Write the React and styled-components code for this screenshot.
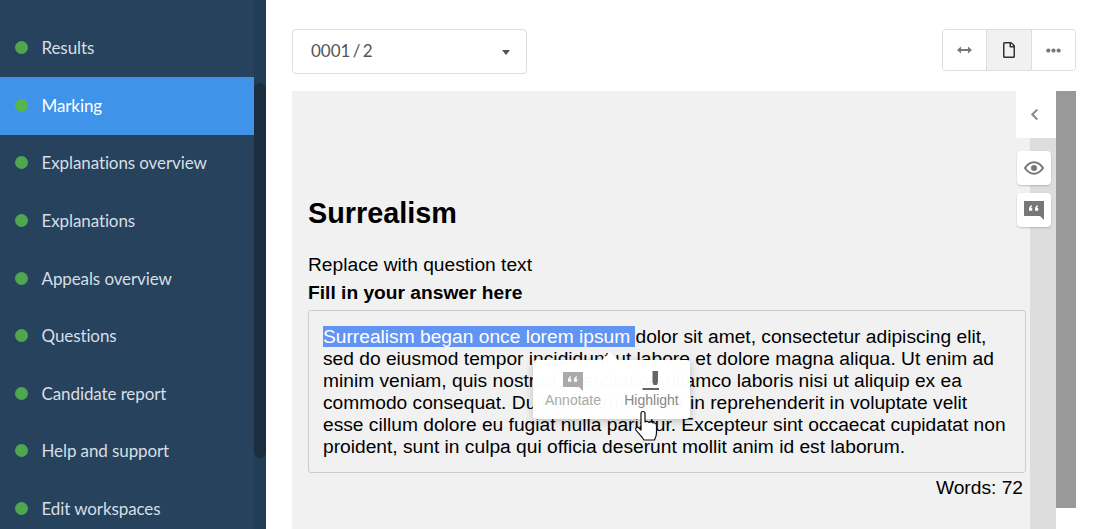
import React from "react";
import styled, { createGlobalStyle } from "styled-components";
import { FaEllipsisH, FaRegFile, FaChevronLeft } from "react-icons/fa";

const GlobalStyle = createGlobalStyle`
  html, body {
    margin: 0;
    height: 100%;
    overflow: hidden;
    background: #fff;
  }
`;

const Page = styled.div`
  display: flex;
  height: 529px;
  overflow: hidden;
`;

const Sidebar = styled.nav`
  width: 254px;
  flex: none;
  padding-top: 19px;
  background: #26425d;
  font-family: Lato, sans-serif;
  font-size: 17px;
  letter-spacing: -0.1px;
  overflow: hidden;
`;

const NavItem = styled.div`
  height: 57.6px;
  display: flex;
  align-items: center;
  gap: 13.5px;
  padding-left: 15px;
  color: ${(p) => (p.$active ? "#fff" : "#d8dee4")};
  background: ${(p) => (p.$active ? "#3f94ea" : "transparent")};
  box-shadow: ${(p) => (p.$active ? "0 1px 0 #3f94ea" : "none")};
`;

const Dot = styled.span`
  width: 13px;
  height: 13px;
  border-radius: 50%;
  background: ${(p) => (p.$active ? "#56b54c" : "#4fa651")};
`;

const ScrollTrack = styled.div`
  width: 12px;
  flex: none;
  padding-top: 83px;
  background: #233d56;
`;

const ScrollThumb = styled.div`
  height: 375px;
  border-radius: 6px;
  background: #1a2e40;
`;

const Main = styled.main`
  flex: 1;
  min-width: 0;
  padding: 29px 17px 0 26px;
`;

const TopBar = styled.div`
  display: flex;
  justify-content: space-between;
  align-items: flex-start;
  margin-bottom: 17px;
`;

const Select = styled.div`
  width: 235px;
  height: 45px;
  box-sizing: border-box;
  display: flex;
  align-items: center;
  justify-content: space-between;
  padding: 0 16px 2px 18px;
  border: 1px solid #ddd;
  border-radius: 4px;
  font-family: Lato, sans-serif;
  font-size: 17px;
  word-spacing: -2px;
  color: #555;
`;

const Caret = styled.span`
  width: 0;
  height: 0;
  margin-top: 4px;
  border-left: 4.5px solid transparent;
  border-right: 4.5px solid transparent;
  border-top: 5px solid #555;
`;

const ButtonGroup = styled.div`
  display: flex;
  height: 42px;
  box-sizing: border-box;
  border: 1px solid #ddd;
  border-radius: 4px;
  overflow: hidden;
`;

const GroupButton = styled.div`
  width: ${(p) => p.$w}px;
  display: flex;
  align-items: center;
  justify-content: center;
  color: ${(p) => (p.$active ? "#333" : "#777")};
  background: ${(p) => (p.$active ? "#f1f1f1" : "#fff")};
  border-left: ${(p) => (p.$first ? "none" : "1px solid #ddd")};
  font-size: ${(p) => p.$size}px;
`;

const Workspace = styled.div`
  display: flex;
  align-items: flex-start;
`;

const Paper = styled.section`
  position: relative;
  width: 764px;
  height: 438px;
  flex: none;
  display: flex;
  background: #f1f1f1;
  font-family: "Liberation Sans", Arial, sans-serif;
  color: #000;
`;

const Sheet = styled.div`
  flex: 1;
  min-width: 0;
  padding: 106px 4px 0 16px;
`;

const Strip = styled.div`
  width: 26px;
  flex: none;
  background: #ddd;
`;

const ScrollBlock = styled.div`
  width: 20px;
  height: 417px;
  flex: none;
  background: #999;
`;

const Title = styled.h1`
  margin: 0 0 24px;
  font-size: 28.8px;
  line-height: 33px;
  font-weight: 700;
`;

const Prompt = styled.div`
  font-size: 19.2px;
  line-height: 22px;
  margin-bottom: ${(p) => p.$mb}px;
  font-weight: ${(p) => (p.$bold ? 700 : 400)};
`;

const AnswerBox = styled.div`
  position: relative;
  height: 163px;
  box-sizing: border-box;
  padding: 15px 14px 0;
  border: 1px solid #ccc;
  border-radius: 3px;
  font-size: 19.2px;
  line-height: 22px;
`;

const Selected = styled.span`
  background: #6194f3;
  color: #fff;
`;

const WordCount = styled.div`
  margin-top: 4px;
  padding-right: 3px;
  text-align: right;
  font-size: 19.2px;
  line-height: 22px;
`;

const Popup = styled.div`
  position: absolute;
  left: 224px;
  top: 49px;
  width: 157px;
  height: 59px;
  display: flex;
  border-radius: 4px;
  background: rgba(255, 255, 255, 0.985);
  box-shadow: 0 2px 8px rgba(0, 0, 0, 0.22);

  &::before {
    content: "";
    position: absolute;
    left: 69px;
    top: -8px;
    border-left: 8px solid transparent;
    border-right: 8px solid transparent;
    border-bottom: 8px solid #fff;
  }
`;

const PopupAction = styled.div`
  flex: none;
  width: ${(p) => p.$w}px;
  display: flex;
  flex-direction: column;
  align-items: center;
  padding-top: 11px;
  font-size: 14px;
  line-height: 16px;
  color: ${(p) => p.$color};
`;

const PopupIcon = styled.svg`
  display: block;
  margin-bottom: 1px;
`;

const HandCursor = styled.svg`
  position: absolute;
  left: 325px;
  top: 99px;
`;

const SideTab = styled.div`
  position: absolute;
  left: 724px;
  top: 0;
  width: 40px;
  height: 47px;
  box-sizing: border-box;
  padding-right: 3px;
  display: flex;
  align-items: center;
  justify-content: center;
  background: #fff;
  border-radius: 0 0 0 2px;
  color: #888;
  font-size: 13px;
`;

const SideTools = styled.div`
  position: absolute;
  left: 725px;
  top: 60px;
  display: flex;
  flex-direction: column;
  gap: 8px;
`;

const ToolButton = styled.div`
  width: 34px;
  height: 34px;
  display: flex;
  align-items: center;
  justify-content: center;
  background: #fff;
  border-radius: 4px;
  box-shadow: 0 1px 2px rgba(0, 0, 0, 0.2);
`;

const QuoteBubble = ({ color }) => (
  <PopupIcon width="20" height="20" viewBox="0 0 20 20" fill={color}>
    <path
      fillRule="evenodd"
      d="M0 1h20v19l-4-4H0zM5 9.500c0-2.300.8-3.700 2.800-4.200l.3 1.100c-.9.300-1.300.8-1.300 1.300h1.400v3H5zM11 9.500c0-2.300.8-3.700 2.800-4.200l.3 1.100c-.9.300-1.300.8-1.300 1.300h1.400v3H11z"
    />
  </PopupIcon>
);

const WidthArrows = () => (
  <svg width="15" height="10" viewBox="0 0 15 10" fill="currentColor">
    <path d="M0 5l4-3.500V4h7V1.500L15 5l-4 3.500V6H4v2.500z" />
  </svg>
);

const EyeIcon = () => (
  <svg width="20" height="14" viewBox="0 0 20 14" fill="none" stroke="#777">
    <path strokeWidth="2" d="M1 7c2.500-3.800 5.500-5.700 9-5.700S16.500 3.200 19 7c-2.500 3.800-5.500 5.700-9 5.700S3.500 10.800 1 7z" />
    <circle cx="10" cy="7" r="3" fill="#777" stroke="none" />
  </svg>
);

const navItems = [
  "Results",
  "Marking",
  "Explanations overview",
  "Explanations",
  "Appeals overview",
  "Questions",
  "Candidate report",
  "Help and support",
  "Edit workspaces",
];

export default function App() {
  return (
    <>
      <GlobalStyle />
      <Page>
        <Sidebar>
          {navItems.map((item) => (
            <NavItem key={item} $active={item === "Marking"}>
              <Dot $active={item === "Marking"} />
              {item}
            </NavItem>
          ))}
        </Sidebar>
        <ScrollTrack>
          <ScrollThumb />
        </ScrollTrack>
        <Main>
          <TopBar>
            <Select>
              0001 / 2
              <Caret />
            </Select>
            <ButtonGroup>
              <GroupButton $first $w={43} $size={15}>
                <WidthArrows />
              </GroupButton>
              <GroupButton $active $w={44} $size={16}>
                <FaRegFile />
              </GroupButton>
              <GroupButton $w={43} $size={15}>
                <FaEllipsisH />
              </GroupButton>
            </ButtonGroup>
          </TopBar>
          <Workspace>
            <Paper>
              <Sheet>
                <Title>Surrealism</Title>
                <Prompt $mb={6}>Replace with question text</Prompt>
                <Prompt $bold $mb={6}>
                  Fill in your answer here
                </Prompt>
                <AnswerBox>
                  <Selected>Surrealism began once lorem ipsum </Selected>dolor sit
                  amet, consectetur adipiscing elit, sed do eiusmod tempor incididunt
                  ut labore et dolore magna aliqua. Ut enim ad minim veniam, quis
                  nostrud exercitation ullamco laboris nisi ut aliquip ex ea commodo
                  consequat. Duis aute irure dolor in reprehenderit in voluptate velit
                  esse cillum dolore eu fugiat nulla pariatur. Excepteur sint occaecat
                  cupidatat non proident, sunt in culpa qui officia deserunt mollit
                  anim id est laborum.
                  <Popup>
                    <PopupAction $w={80} $color="#aaa">
                      <QuoteBubble color="#aaa" />
                      Annotate
                    </PopupAction>
                    <PopupAction $w={77} $color="#888">
                      <PopupIcon width="20" height="20" viewBox="0 0 20 20" fill="#666">
                        <path d="M10.500 0h5.500v11l-1 3h-3.500l-1-3z" />
                        <rect x="0.500" y="17" width="16.500" height="2" />
                      </PopupIcon>
                      Highlight
                    </PopupAction>
                  </Popup>
                  <HandCursor width="26" height="34" viewBox="0 0 26 34">
                    <path
                      d="M7 3c0-2 4-2 4 0v9c1-1 3-1 4 .5 1-1 3-1 4 .5 1-.5 3 0 3.500 2v8c0 3-1 5-2 7H10c-2-3-5-6-8-10-1-2 1-4 3-2l2 2z"
                      fill="#fff"
                      stroke="#111"
                      strokeWidth="1.200"
                      strokeLinejoin="round"
                    />
                  </HandCursor>
                </AnswerBox>
                <WordCount>Words: 72</WordCount>
              </Sheet>
              <Strip />
              <SideTab>
                <FaChevronLeft />
              </SideTab>
              <SideTools>
                <ToolButton>
                  <EyeIcon />
                </ToolButton>
                <ToolButton>
                  <QuoteBubble color="#777" />
                </ToolButton>
              </SideTools>
            </Paper>
            <ScrollBlock />
          </Workspace>
        </Main>
      </Page>
    </>
  );
}
